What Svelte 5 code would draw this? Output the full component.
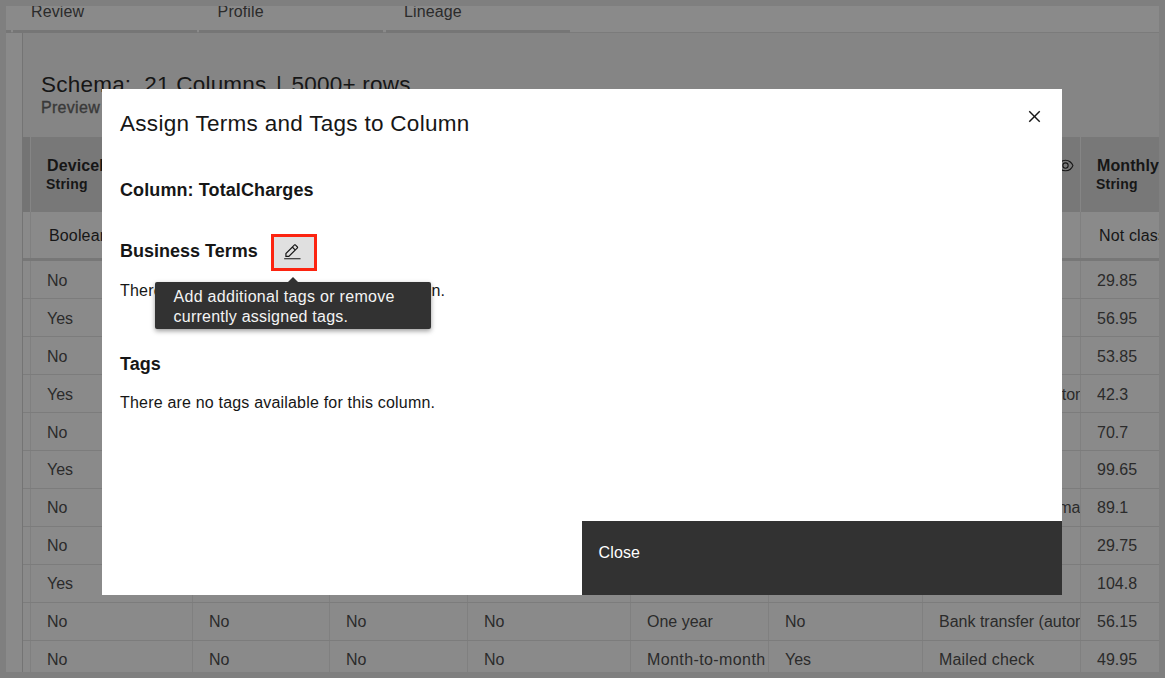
<script>
  const tabs = ['Review', 'Profile', 'Lineage'];
  const rows = [
    ['No', '', '', '', '', '', '', '29.85'],
    ['Yes', '', '', '', '', '', '', '56.95'],
    ['No', '', '', '', '', '', '', '53.85'],
    ['Yes', '', '', '', '', '', 'Bank transfer (automatic)', '42.3'],
    ['No', '', '', '', '', '', '', '70.7'],
    ['Yes', '', '', '', '', '', '', '99.65'],
    ['No', '', '', '', '', '', 'Credit card (automatic)', '89.1'],
    ['No', '', '', '', '', '', '', '29.75'],
    ['Yes', '', '', '', '', '', '', '104.8'],
    ['No', 'No', 'No', 'No', 'One year', 'No', 'Bank transfer (automatic)', '56.15'],
    ['No', 'No', 'No', 'No', 'Month-to-month', 'Yes', 'Mailed check', '49.95']
  ];
  const middle = [1, 2, 3, 4, 5];
</script>

<div class="screen">
  <div class="page">
    <nav class="tabs">
      <div class="tab lead"></div>
      {#each tabs as t}<div class="tab"><span>{t}</span></div>{/each}
    </nav>
    <section class="panel">
      <div class="schema">Schema:&nbsp; 21 Columns <i>|</i> 5000+ rows</div>
      <div class="preview">Preview</div>
      <div class="grid head">
        <div class="gutter"></div>
        <div class="cell"><b>DeviceProtection</b><small>String</small></div>
        {#each middle as m}<div class="cell"></div>{/each}
        <div class="cell eyecell">
          <svg class="eye" viewBox="0 0 32 32"><path d="M30.94 15.66A16.69 16.69 0 0 0 16 5 16.69 16.69 0 0 0 1.06 15.66a1 1 0 0 0 0 .68A16.69 16.69 0 0 0 16 27a16.69 16.69 0 0 0 14.94-10.66 1 1 0 0 0 0-.68zM16 25c-5.3 0-10.9-3.93-12.93-9C5.1 10.93 10.7 7 16 7s10.9 3.93 12.93 9C26.9 21.07 21.3 25 16 25z" /><path d="M16 10a6 6 0 1 0 6 6 6 6 0 0 0-6-6zm0 10a4 4 0 1 1 4-4 4 4 0 0 1-4 4z" /></svg>
        </div>
        <div class="cell"><b>MonthlyCharges</b><small>String</small></div>
      </div>
      <div class="grid classes">
        <div class="gutter"></div>
        <div class="cell">Boolean</div>
        {#each middle as m}<div class="cell"></div>{/each}
        <div class="cell"></div>
        <div class="cell">Not classified</div>
      </div>
      {#each rows as r, i}
        <div class="grid row" class:upper={i < 5}>
          <div class="gutter"></div>
          {#each r as c}<div class="cell" class:wide={c.includes('-')} class:roomy={c === 'Mailed check'}>{c}</div>{/each}
        </div>
      {/each}
    </section>
  </div>

  <div class="modal" role="dialog">
    <header>
      <h1>Assign Terms and Tags to Column</h1>
      <svg class="close" viewBox="0 0 32 32"><path d="M24 9.4L22.6 8 16 14.6 9.4 8 8 9.4l6.6 6.6L8 22.6 9.4 24l6.6-6.6 6.6 6.6 1.4-1.4-6.6-6.6L24 9.4z" /></svg>
    </header>
    <div class="body">
      <h2 class="column">Column: TotalCharges</h2>
      <div class="terms">
        <h2 class="business">Business Terms</h2>
        <div class="edit">
          <svg viewBox="0 0 32 32"><path d="M2 26h28v2H2zM25.4 9c.8-.8.8-2 0-2.8l-3.6-3.6c-.8-.8-2-.8-2.8 0l-15 15V24h6.4l15-15zm-5-5L24 7.6l-3 3L17.4 7l3-3zM6 22v-3.6l10-10 3.6 3.6-10 10H6z" /></svg>
          <div class="tooltip">Add additional tags or remove<br /><span>currently assigned tags.</span></div>
        </div>
      </div>
      <p class="p1">There are no terms available for this column.</p>
      <h2 class="tags">Tags</h2>
      <p class="p2">There are no tags available for this column.</p>
    </div>
    <footer><div class="closebtn">Close</div></footer>
  </div>
</div>

<style>
  :global(body) { margin: 0; overflow: hidden; }
  * { box-sizing: border-box; }
  .screen {
    width: 1165px; height: 678px; padding: 6px; overflow: hidden; position: relative;
    background: #7f7f7f; font: 16px/20px "Liberation Sans", Arial, sans-serif; color: #2b2b2b;
  }
  .page { width: 1153px; height: 666px; overflow: hidden; background: #8a8a8a; }
  .tabs { height: 27px; display: flex; gap: 2.5px; border-bottom: 1px solid #7b7b7b; }
  .tab { width: 184px; height: 27px; flex: none; border-bottom: 3px solid #767676; padding-left: 18.5px; }
  .tab.lead { width: 5px; padding: 0; margin-right: -.9px; }
  .tab span { display: block; margin-top: -4px; letter-spacing: .1px; }
  .panel { margin-left: 16px; height: 640px; border-left: 1px solid #747474; background: #858585; }
  .schema { height: 61px; padding: 39px 0 0 18px; font-size: 22.5px; line-height: 26px; letter-spacing: .22px; color: #161616; white-space: nowrap; }
  .schema i { font-style: normal; margin: 0 3px 0 3px; }
  .preview { height: 43px; padding: 4px 0 0 18px; letter-spacing: .3px; -webkit-text-stroke: .35px #393939; color: #393939; }
  .grid { display: grid; grid-template-columns: 7px 162px 137px 138px 163px 138px 154px 158px 160px; }
  .cell { border-left: 1px solid #808080; padding-left: 16px; overflow: hidden; white-space: nowrap; }
  .head { height: 75px; background: #787878; color: #161616; }
  .head .gutter { background: #747474; }
  .head .cell { border-color: #858585; padding-top: 19px; }
  .head b, .head small { display: block; line-height: 20px; }
  .head b { letter-spacing: .1px; }
  .head small { font-size: 14px; font-weight: 700; line-height: 18px; margin: -1px 0 0 -1px; letter-spacing: .2px; }
  .head .eyecell { display: flex; justify-content: flex-end; padding-right: 6px; }
  .eye { width: 17px; height: 17px; margin-top: 1px; fill: #161616; }
  .classes { height: 49px; background: #8a8a8a; border-bottom: 3px solid #777; color: #161616; }
  .classes .cell { padding: 14px 0 0 18px; letter-spacing: .15px; }
  .row { height: 38px; background: #8a8a8a; border-bottom: 1px solid #7c7c7c; }
  .row .cell { line-height: 38px; }
  .row.upper .cell { line-height: 40px; height: 37px; }
  .row .wide { letter-spacing: .4px; }
  .row .roomy { letter-spacing: .17px; }

  .modal { position: absolute; left: 102px; top: 89px; width: 960px; height: 506px; background: #fff; color: #161616; display: flex; flex-direction: column; }
  header { display: flex; justify-content: space-between; height: 89px; padding: 16px 16px 0 18px; }
  h1 { margin: 6px 0 0; font-size: 22.5px; font-weight: 400; line-height: 26px; letter-spacing: .29px; white-space: nowrap; }
  .close { width: 23px; height: 23px; fill: #161616; }
  .body { flex: 1; padding-left: 18px; }
  h2 { margin: 0; font-size: 18px; line-height: 24px; white-space: nowrap; }
  .column { letter-spacing: .1px; }
  .terms { display: flex; height: 38px; margin-top: 32px; align-items: flex-start; }
  .business { width: 151.4px; margin-top: 5px; }
  .edit { position: relative; width: 46px; height: 37px; border: 3px solid #fc2410; background: #e0e0e0; padding: 6px 0 0 9px; }
  .edit svg { display: block; width: 18.7px; height: 18.7px; fill: #161616; }
  .tooltip { position: absolute; left: -119.4px; top: 45px; width: 276px; height: 47px; padding: 5px 0 0 18.5px; background: #323232; color: #f4f4f4; border-radius: 2px; box-shadow: 0 2px 5px #0006; letter-spacing: .3px; white-space: nowrap; }
  .tooltip span { letter-spacing: .24px; }
  .tooltip::before { content: ""; position: absolute; left: 133px; top: -5px; border: 5px solid transparent; border-top: 0; border-bottom-color: #323232; }
  p { margin: 0; white-space: nowrap; letter-spacing: .19px; }
  .p1 { margin-top: 9px; }
  .tags { margin-top: 51px; }
  .p2 { margin-top: 17px; }
  footer { display: flex; justify-content: flex-end; height: 74px; }
  .closebtn { width: 480px; background: #323232; color: #fff; padding: 22px 0 0 16.5px; letter-spacing: .15px; }
</style>
